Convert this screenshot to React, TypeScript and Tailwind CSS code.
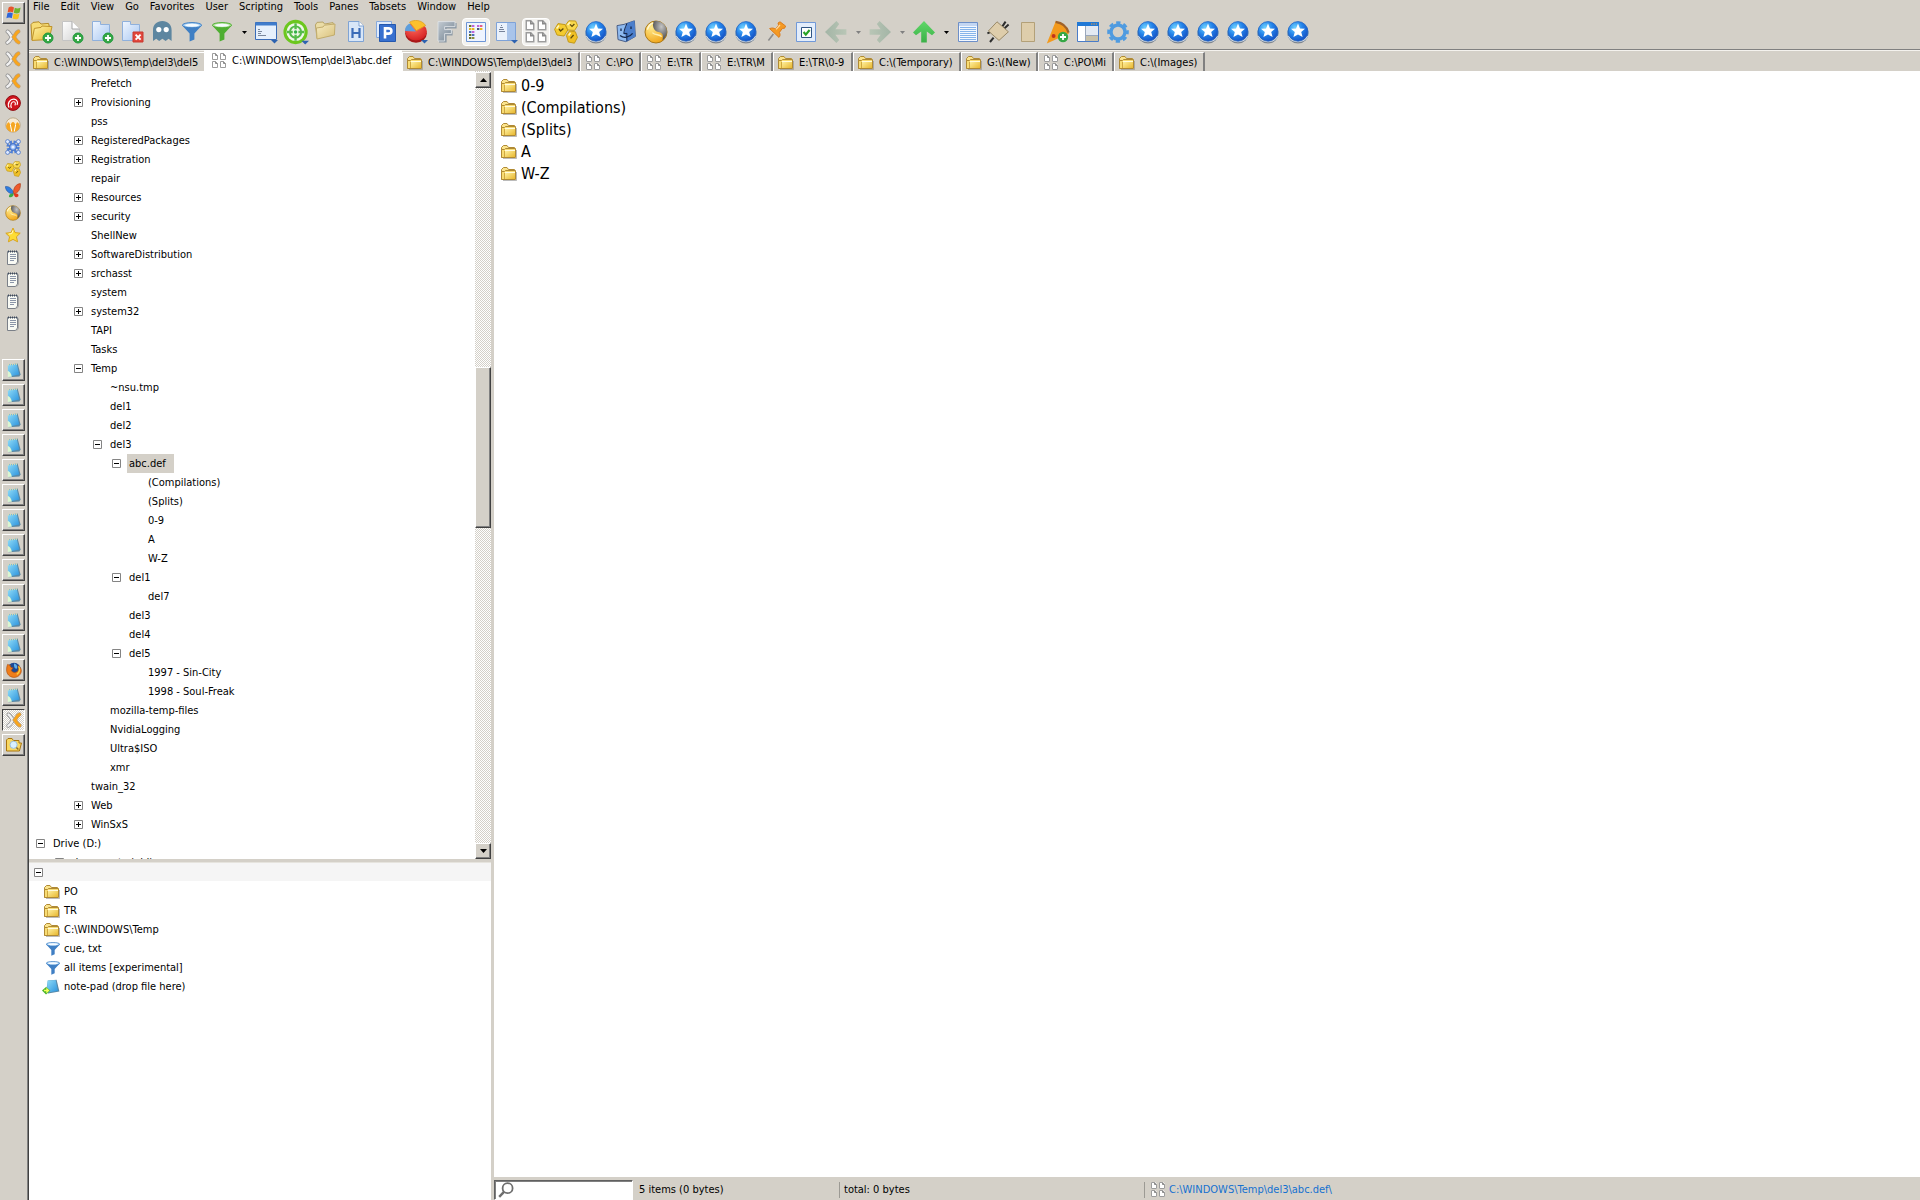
import type { ReactNode } from 'react';

type IconProps = { className?: string };

function Svg({ box, className, children }: { box: string; className: string; children: ReactNode }) {
  return (
    <svg viewBox={box} className={'shrink-0 ' + className} aria-hidden="true" fill="none">
      {children}
    </svg>
  );
}

function Gradients() {
  return (
    <svg className="absolute h-0 w-0" aria-hidden="true">
      <defs>
        <linearGradient id="gold" x1="0" y1="0" x2="1" y2="1">
          <stop offset="0" stopColor="#fff3a6" />
          <stop offset="1" stopColor="#e8b830" />
        </linearGradient>
        <linearGradient id="paleGold" x1="0" y1="0" x2="1" y2="1">
          <stop offset="0" stopColor="#f7ecc2" />
          <stop offset="1" stopColor="#d8c07a" />
        </linearGradient>
        <linearGradient id="sheet" x1="0" y1="0" x2="1" y2="1">
          <stop offset="0" stopColor="#ffffff" />
          <stop offset="1" stopColor="#d2d2d2" />
        </linearGradient>
        <linearGradient id="sky" x1="0" y1="0" x2="1" y2="1">
          <stop offset="0" stopColor="#f0f6ff" />
          <stop offset="1" stopColor="#a9c8f2" />
        </linearGradient>
        <linearGradient id="paper" x1="0" y1="0" x2="1" y2="1">
          <stop offset="0" stopColor="#8fdcf8" />
          <stop offset="1" stopColor="#2a92dc" />
        </linearGradient>
        <linearGradient id="steel" x1="0" y1="0" x2="1" y2="1">
          <stop offset="0" stopColor="#c3cbd2" />
          <stop offset="1" stopColor="#6f7f8e" />
        </linearGradient>
        <linearGradient id="green" x1="0" y1="0" x2="0" y2="1">
          <stop offset="0" stopColor="#5fd868" />
          <stop offset="1" stopColor="#3cb048" />
        </linearGradient>
        <linearGradient id="faded" x1="0" y1="0" x2="0" y2="1">
          <stop offset="0" stopColor="#a3b5a6" />
          <stop offset="1" stopColor="#b9c6b6" />
        </linearGradient>
        <linearGradient id="rim" x1="0" y1="0" x2="0" y2="1">
          <stop offset="0" stopColor="#2f86dc" />
          <stop offset="0.7" stopColor="#4a76a8" />
          <stop offset="1" stopColor="#8a8a8a" />
        </linearGradient>
        <radialGradient id="ball" cx="0.35" cy="0.3" r="0.75">
          <stop offset="0" stopColor="#6fd2ff" />
          <stop offset="0.5" stopColor="#2484ea" />
          <stop offset="1" stopColor="#1450c4" />
        </radialGradient>
        <radialGradient id="amber" cx="0.3" cy="0.3" r="0.8">
          <stop offset="0" stopColor="#ffe98a" />
          <stop offset="1" stopColor="#f0a010" />
        </radialGradient>
        <radialGradient id="smoke" cx="0.6" cy="0.3" r="0.7">
          <stop offset="0" stopColor="#c4c4c4" />
          <stop offset="1" stopColor="#4c4c4c" />
        </radialGradient>
        <radialGradient id="ember" cx="0.4" cy="0.3" r="0.8">
          <stop offset="0" stopColor="#ff6a5a" />
          <stop offset="1" stopColor="#d01a1e" />
        </radialGradient>
      </defs>
    </svg>
  );
}

/* ---------- small icons, 16 px grid ---------- */

function Folder({ className = 'size-4' }: IconProps) {
  return (
    <Svg box="0 0 16 16" className={className}>
      <path d="M2 14.5H15.5V6" stroke="#8d8d8d" strokeOpacity=".6" />
      <path d="M.5 13.5V3.5L2.5 1.5H6L7.5 3.5H13.5V6" fill="#fbe48c" stroke="#b08a34" />
      <path d="M.5 13.5V5.5H3.5L4.5 4.5H14.5V13.5Z" fill="#f8dc74" stroke="#b08a34" />
      <path d="M4 6H14V13H4Z" fill="url(#gold)" />
      <path d="M4 6.5H14" stroke="#fffbe0" />
      <path d="M3.5 7V13" stroke="#d0a840" />
    </Svg>
  );
}

function Panes({ className = 'size-4' }: IconProps) {
  const page = (x: number, y: number) => (
    <g key={x + '-' + y}>
      <path d={`M${x} ${y}h4l2 2v5h-6z`} fill="#fff" />
      <path d={`M${x + 0.5} ${y + 6.5}v-6h3l2 2v4z`} stroke="#9c9c9c" />
      <path d={`M${x + 3.5} ${y + 0.5}v2h2`} stroke="#8a8a8a" />
    </g>
  );
  return (
    <Svg box="0 0 16 16" className={className}>
      {[page(1, 0), page(9, 0), page(1, 8), page(9, 8)]}
    </Svg>
  );
}

function Funnel({ className = 'size-4', tint = '#3f7fc4', rim = '#a9d2f5' }: IconProps & { tint?: string; rim?: string }) {
  return (
    <Svg box="0 0 20 20" className={className}>
      <path d="M0 3.2 7.6 11.5V19.6L12.4 17.6V11.5L20 3.2Z" fill={tint} />
      <ellipse cx="10" cy="3.2" rx="9.6" ry="2.6" fill={rim} stroke={tint} />
      <ellipse cx="10" cy="3.2" rx="7" ry="1.5" fill="#f6fbff" />
    </Svg>
  );
}

function NotePad({ className = 'size-4' }: IconProps) {
  return (
    <Svg box="0 0 16 16" className={className}>
      <path d="M3 2.6 11.6 1.6 14.6 12.6 13.4 14.6 2.6 15.2Z" fill="#5a88a4" />
      <path d="M1.8 2.8 10.8 2 13.2 12.6 2 14.8Z" fill="url(#paper)" />
      <path d="M1.8 9C4.4 9.6 5.6 13 5.8 14.8L1.8 15Z" fill="#dcf6d0" />
      <path d="M2 2.8 11 2" stroke="#d8dcb0" strokeWidth="1.6" strokeDasharray="1 1" />
    </Svg>
  );
}

function CrossLogo({ className = 'size-4' }: IconProps) {
  return (
    <Svg box="0 0 16 16" className={className}>
      <path d="M2.6 2.6C4.6 3.6 5 6 7 8 5.4 10 5 12.4 2.4 13.6" stroke="#8f8f8f" strokeWidth="4" strokeLinecap="round" />
      <path d="M2.6 2.6C4.6 3.6 5 6 7 8 5.4 10 5 12.4 2.4 13.6" stroke="#f1f1f1" strokeWidth="2.6" strokeLinecap="round" />
      <path d="M13.4 2.4C10.6 3.8 10.6 6 8.8 8 10.6 10 11 12.4 13.6 13.4" stroke="#b9a080" strokeWidth="4" strokeLinecap="round" />
      <path d="M13.4 2.4C10.6 3.8 10.6 6 8.8 8 10.6 10 11 12.4 13.6 13.4" stroke="#f9a51c" strokeWidth="2.8" strokeLinecap="round" />
    </Svg>
  );
}

function WindowsFlag() {
  return (
    <Svg box="0 0 16 16" className="size-4">
      <path d="M2.6 2.4C4.6 1.2 6 1.4 8 2.4L7 7.4C5 6.4 3.6 6.4 1.6 7.4Z" fill="#e8542a" />
      <path d="M8.8 2.8C10.8 3.8 12.4 3.8 14.6 2.6L13.6 7.6C11.4 8.8 9.8 8.6 7.8 7.8Z" fill="#6fb52c" />
      <path d="M1.4 8.2C3.4 7.2 4.8 7.2 6.8 8.2L5.8 13.2C3.8 12.2 2.4 12.2.4 13.2Z" fill="#2f66d8" />
      <path d="M7.6 8.6C9.6 9.4 11.2 9.6 13.4 8.4L12.4 13.4C10.2 14.6 8.6 14.4 6.6 13.6Z" fill="#f5c11e" />
    </Svg>
  );
}

function RedSwirl() {
  return (
    <Svg box="0 0 16 16" className="size-4">
      <circle cx="8" cy="8" r="7.4" fill="#d0141c" stroke="#8e0e14" />
      <path d="M4 12.6C2 8 5 4 9 4.2 12 4.6 13.4 7.6 12 10" stroke="#fff" strokeWidth="1.2" />
      <path d="M6.4 13C5 9.4 6.6 6.6 9 6.8 10.6 7.2 10.8 9 9.8 10.4" stroke="#fff" strokeWidth="1.1" />
    </Svg>
  );
}

function AmberFan() {
  return (
    <Svg box="0 0 16 16" className="size-4">
      <circle cx="8" cy="8" r="7.2" fill="#f7ead4" stroke="#b9a88a" />
      <path d="M1 9C3 4 4.4 4 5.4 9 6.4 3.6 9.6 3.6 10.6 9 11.6 4 13 4 15 9 14.4 13 11 15 8 15 5 15 1.6 13 1 9Z" fill="#f5a623" />
      <path d="M5.4 8 6.8 14.6M10.6 8 9.2 14.6" stroke="#fff" />
    </Svg>
  );
}

function BlueGear() {
  return (
    <Svg box="0 0 16 16" className="size-4">
      <circle cx="8" cy="8" r="4.6" stroke="#4f80d8" strokeWidth="4" strokeDasharray="2.2 1.4" />
      <circle cx="8" cy="8" r="3.4" fill="#8fb6f4" stroke="#3c67bd" />
      <circle cx="8" cy="8" r="1.6" fill="#e8f0ff" />
      {[[2.6, 2.6], [13.4, 2.6], [2.6, 13.4], [13.4, 13.4]].map(([x, y]) => (
        <circle key={x + '-' + y} cx={x} cy={y} r="2" fill="#dfeaff" stroke="#4672c4" strokeWidth=".8" />
      ))}
    </Svg>
  );
}

function Cells({ className = 'size-4' }: IconProps) {
  return (
    <Svg box="0 0 24 24" className={className}>
      <path d="M0.6 9.4 4 3.6 11 4.6 13.8 10 10 16 3 15Z" fill="#f4cb2e" stroke="#c29a1c" />
      <path d="M11.6 5 14.8.8 21.6 1 23.6 5.6 20.6 10.4 13.8 10Z" fill="#f9d94e" stroke="#c29a1c" />
      <path d="M12.4 15.4 15.4 11 21.4 11.8 23.4 17.4 20.4 23.2 14.4 22Z" fill="#f0c026" stroke="#c29a1c" />
      <path d="M5 9 6.6 11 9.4 8.4M16 4.4 18 6.4 20.4 4M16.6 18.4 19.6 15" stroke="#5d4a0c" strokeWidth="1.3" />
      <path d="M2.6 8.4 5 5.6M13.6 5 16 2.4M14.6 15.4 16.6 12.8" stroke="#fff6c0" strokeWidth="1.6" />
    </Svg>
  );
}

function Butterfly() {
  return (
    <Svg box="0 0 16 16" className="size-4">
      <path d="M8.4 9.4C6.6 5 3.6 3 .4 3.6.6 7 3 10.4 8 11Z" fill="#2f7de0" stroke="#1c4fa0" strokeWidth=".6" />
      <path d="M8.4 9.4C8.6 4.6 11 1 15.4.6 15.8 5 14 9.6 9 11Z" fill="#ee5a2a" stroke="#a83410" strokeWidth=".6" />
      <path d="M8 10.4C5.6 10.4 3.6 11.4 4 14 6.6 15 8.4 13.6 8.8 10.8Z" fill="#39a845" />
      <path d="M9 10.8C12 9.8 14 10.6 13.4 13.2 11 15.4 9.2 14 8.8 10.8Z" fill="#e2371c" />
    </Svg>
  );
}

function YinYang({ className = 'size-4' }: IconProps) {
  return (
    <Svg box="0 0 24 24" className={className}>
      <circle cx="12" cy="12" r="11" fill="url(#amber)" stroke="#a8781a" />
      <path d="M10 1.2C18 0 24 6 22.8 13.4 22 17 20 19 18.4 20 20 15 18 12.6 14.4 12 9.6 11 7.6 5 10 1.2Z" fill="url(#smoke)" />
      <path d="M8.4 12.6C11 15.6 15.6 14 17.6 16.6" stroke="#fff0b0" strokeWidth="1.4" />
      <path d="M3.6 9C4.6 5.6 6.4 4 8.4 3.2" stroke="#fff6cf" strokeWidth="1.6" strokeLinecap="round" />
    </Svg>
  );
}

function GoldStar() {
  return (
    <Svg box="0 0 16 16" className="size-4">
      <path d="M8 1 10 5.6 15.2 6.2 11.4 9.8 12.6 14.8 8 12.4 3.4 14.8 4.6 9.8.8 6.2 6 5.6Z" fill="#fddc34" stroke="#d9a41c" strokeLinejoin="round" />
      <path d="M8 3.4 6.8 6.6 3.6 7" stroke="#fff8c8" />
    </Svg>
  );
}

function MemoPage() {
  return (
    <Svg box="0 0 16 16" className="size-4">
      <path d="M2.5 2.5H12.5V13L10.5 15.5H2.5Z" fill="#f9faf4" stroke="#7b8088" />
      <path d="M13.5 3.4V13.6L11.6 15.8" stroke="#a7a7a7" />
      <path d="M3 2.4H13" stroke="#3e4a5c" strokeWidth="2" strokeDasharray="1 1" />
      <path d="M5 5.5H11M5 7.5H11M5 9.5H11M5 11.5H9" stroke="#8b95a8" />
    </Svg>
  );
}

function Firefox() {
  return (
    <Svg box="0 0 16 16" className="size-4">
      <circle cx="8" cy="7.6" r="6.8" fill="#1d4a94" />
      <path d="M8 1.6C10.6 2.2 12 4.6 10.8 6.8 9 7 7.6 5.4 8 1.6Z" fill="#5fb0ea" />
      <path d="M1.6 2.4C2.6 3 3.4 3 4.4 3.2 4 5 4.6 5.4 6.8 5.8 6.6 7.4 5.4 7.4 5.4 8.6 6 10.6 9.4 11 11.4 9.4 13 8 12.4 5 12 3.4 14.6 5 15.8 7.6 15.2 10 14.2 13.6 11 15.6 7.6 15.4 3.4 15 .6 12 .6 8 .6 6 .8 4 1.6 2.4Z" fill="#ef7d1a" stroke="#a8480a" strokeWidth=".6" />
      <path d="M12.6 4.4C14.4 7 13.8 10.6 10.8 12.4" stroke="#fbd03a" strokeWidth="1.4" />
    </Svg>
  );
}

function FolderSearch() {
  return (
    <Svg box="0 0 16 16" className="size-4">
      <path d="M.5 14V3L2 1.5H6L7.4 3.5H13V6H15.5L13.4 14Z" fill="#f8d862" stroke="#a8740c" />
      <circle cx="7.6" cy="7.8" r="3.6" fill="#d8f0ff" stroke="#9cc0dc" />
      <path d="M10.4 10.4 12.4 12.4" stroke="#8a6a2a" strokeWidth="1.4" />
    </Svg>
  );
}

function Lens() {
  return (
    <Svg box="0 0 16 16" className="size-4">
      <circle cx="9.6" cy="6.2" r="5" stroke="#6e6e6e" strokeWidth="1.8" />
      <path d="M6 9.8 1.2 14.8" stroke="#6e6e6e" strokeWidth="2.4" />
    </Svg>
  );
}

function NotePadDrop() {
  return (
    <Svg box="0 0 18 16" className="h-4 w-[18px]">
      <path d="M6 1.4 14.6.8 17.4 12.6 6 14.4 4 12Z" fill="#5a88a4" />
      <path d="M5.4 1.6 13.6 1 16 12 5 13.4Z" fill="url(#paper)" />
      <path d="M0 11.5 4 8 8.4 11.5 4 15.4Z" fill="#4db52a" />
      <path d="M2 11.5H5.6M4.4 9.6 6.4 11.5 4.4 13.4" stroke="#f2ff5c" strokeWidth="1.4" />
    </Svg>
  );
}

/* ---------- toolbar icons, 24 px grid ---------- */

const tool = 'size-6';

function PlusBadge() {
  return (
    <g>
      <circle cx="18" cy="18" r="5" fill="#35a745" stroke="#1f9a3c" />
      <path d="M18 15V21M15 18H21" stroke="#fff" strokeWidth="1.8" />
    </g>
  );
}

function FolderNew() {
  return (
    <Svg box="0 0 24 24" className={tool}>
      <path d="M2 20 1 4.6 3 2.4 9 1.8 11 4 18.6 3.4 19.4 7" fill="#f6dc76" stroke="#b48a26" />
      <path d="M2 20.4 4.4 8.4 11 7.4 12 6 22 6.6 19 19.6Z" fill="url(#gold)" stroke="#c0932a" />
      <PlusBadge />
    </Svg>
  );
}

function PageNew() {
  return (
    <Svg box="0 0 24 24" className={tool}>
      <path d="M2.5 1.5H12L19.5 9V20.5H2.5Z" fill="url(#sheet)" stroke="#c4c4c4" />
      <path d="M12 1.5V9H19.5" fill="#fff" stroke="#a5a5a5" />
      <PlusBadge />
    </Svg>
  );
}

function TabNew({ remove }: { remove?: boolean }) {
  return (
    <Svg box="0 0 24 24" className={tool}>
      <path d="M2.5 20.5V1.5H10.5V4.5H19.5V20.5Z" fill="url(#sky)" stroke="#8fb0dc" />
      {remove ? (
        <g>
          <path d="M13 12H23V22H13Z" fill="#e2473c" stroke="#c8382f" />
          <path d="M15.6 14.6 20.6 19.6M20.6 14.6 15.6 19.6" stroke="#fff" strokeWidth="1.9" />
        </g>
      ) : (
        <PlusBadge />
      )}
    </Svg>
  );
}

function Ghost() {
  return (
    <Svg box="0 0 24 24" className={tool}>
      <path d="M3 21V10C3 4.6 7 1 12.4 1 17.6 1 21.6 4.6 21.6 10V21L18.6 18.8 15.6 21 12.4 18.8 9.2 21 6.2 18.8Z" fill="#5d86a0" />
      <circle cx="8.8" cy="9.6" r="2.6" fill="#fff" />
      <circle cx="16.2" cy="9.6" r="2.6" fill="#fff" />
    </Svg>
  );
}

function Corner() {
  return <path d="M17 20H24L20.5 23.6Z" fill="#2d62b0" />;
}

function ConsoleWindow() {
  return (
    <Svg box="0 0 24 24" className={tool}>
      <path d="M1.5 2.5H22.5V19.5H1.5Z" fill="#e6f0fc" stroke="#3a6cb8" />
      <path d="M1.5 2.5H22.5V5.5H1.5Z" fill="#3f7ccc" />
      <path d="M4 9.5H6M4 11.5H8M4 13.5H7M4 15.5H12" stroke="#7a879c" />
      <Corner />
    </Svg>
  );
}

function Target() {
  return (
    <Svg box="0 0 24 24" className="size-[26px]">
      <circle cx="11.6" cy="12" r="9.8" fill="#f0f8ea" stroke="#6cc71e" strokeWidth="2.8" />
      <circle cx="11.6" cy="12" r="5.2" stroke="#55bb4a" strokeWidth="1.8" />
      <path d="M11.6 4V9.4M11.6 14.6V20M3.6 12H9M14.2 12H19.6" stroke="#55bb4a" strokeWidth="2.2" />
      <circle cx="11.6" cy="12" r="1.6" fill="#35b04a" />
      <Corner />
    </Svg>
  );
}

function FadedFolder() {
  return (
    <Svg box="0 0 24 24" className={tool}>
      <path d="M3 18 1.4 5 3 2.4 9 2 10.6 4 19 2.6 19.6 5" fill="#eadca6" stroke="#b8a468" />
      <path d="M3 19 2.4 8 9 7 10.4 5.2 21 4 20.4 15Z" fill="url(#paleGold)" stroke="#c2ac6c" />
    </Svg>
  );
}

function LetterH() {
  return (
    <Svg box="0 0 24 24" className={tool}>
      <path d="M4.5 1.5H15L19.5 6V21.5H4.5Z" fill="#d8e6f8" stroke="#7fa3d4" />
      <path d="M15 1.5V6H19.5" fill="#fff" stroke="#7fa3d4" />
      <path d="M8.5 8V18M15.5 8V18M8.5 13H15.5" stroke="#3a6bb8" strokeWidth="2.2" />
    </Svg>
  );
}

function LetterP() {
  return (
    <Svg box="0 0 24 24" className={tool}>
      <path d="M2.5 1.5H17.5V17.5H2.5Z" fill="#dfeafb" stroke="#86a9dc" />
      <path d="M5.5 4.5H21.5V21.5H5.5Z" fill="#3870cf" stroke="#2558ae" />
      <path d="M11 18.6V8.4H14.4C18.4 8.4 18.4 13.6 14.4 13.6H11" stroke="#fff" strokeWidth="2.6" />
    </Svg>
  );
}

function Pie() {
  return (
    <Svg box="0 0 24 24" className={tool}>
      <ellipse cx="12" cy="13.6" rx="10.8" ry="9.2" fill="#a81818" />
      <ellipse cx="12" cy="11.4" rx="10.8" ry="9" fill="url(#ember)" />
      <path d="M12 11.6 1 11C1 7 3 5 5.6 3.6Z" fill="#5d9edc" />
      <path d="M12.4 10.6 5.6 2.2C10 -.8 18 -.2 21.6 5.6Z" fill="#fbc02c" stroke="#e0a020" strokeWidth=".8" />
      <Corner />
    </Svg>
  );
}

function LetterF() {
  return (
    <Svg box="0 0 24 24" className={tool}>
      <path d="M5 3H22.6V8.4H12.6V10.6H18.6V15.4H12.6V22.4H5Z" fill="#8d9aa6" />
      <path d="M4 1.6H21V6.6H10.6V9.6H17.4V13.6H10.6V21H4Z" fill="url(#steel)" stroke="#dfe3e6" strokeWidth=".9" />
    </Svg>
  );
}

function ListGrid() {
  const colors = [
    ['#6b6f2c', '#c062d8', '#c062d8', '#e05c8c'],
    ['#e9b51c', '#e9b51c', '#4a5a78', '#e9b51c'],
    ['#4a70b8', '#c062d8'],
    ['#5f6a2c', '#4a70b8'],
    ['#6b6f2c', '#8a8f3c'],
  ];
  return (
    <Svg box="0 0 24 24" className={tool}>
      <path d="M2.5 2.5H21.5V21.5H2.5Z" fill="#eef4ff" stroke="#6d95d6" />
      {colors.map((row, r) =>
        row.map((c, k) => (
          <path key={r + '-' + k} d={`M${[5, 8, 13, 16][k]} ${6 + r * 3}h2.4`} stroke={c} strokeWidth="2" />
        )),
      )}
    </Svg>
  );
}

function SidePanel() {
  return (
    <Svg box="0 0 24 24" className={tool}>
      <path d="M2.5 2.5H21.5V20.5H2.5Z" fill="#eaf1fb" stroke="#7ea2d8" />
      <path d="M13 3H21V20H13Z" fill="#a9c4ea" />
      <path d="M7 5.5H8M6 7.5H9M5 9.5H10M5 11.5H11" stroke="#77839a" />
      <Corner />
    </Svg>
  );
}

function StarBall() {
  return (
    <Svg box="0 0 24 24" className={tool}>
      <circle cx="12" cy="13" r="10.6" fill="url(#rim)" />
      <path d="M2.4 16A10.4 9 0 0 0 21.6 16" stroke="#d4d9e0" strokeWidth="1.2" />
      <circle cx="12" cy="11.4" r="9.8" fill="url(#ball)" stroke="#2466c4" strokeWidth=".8" />
      <path d="M12 3.6 14 8.4 19 8.8 15.2 12 16.6 17 12 14.4 7.4 17 8.8 12 5 8.8 10 8.4Z" fill="#fff" />
    </Svg>
  );
}

function Finder() {
  return (
    <Svg box="0 0 24 24" className={tool}>
      <path d="M3 5.6 10 4.4 20.4.8 21.4 16.4 12 21.8 4 19.6Z" fill="#8ebaf0" stroke="#4a5f88" />
      <path d="M12.6 3.6 20.4.8 21.4 16.4 12 21.8C13 17 11 14 9.6 13.4 11 10 11.4 7 12.6 3.6Z" fill="#4c7fcc" />
      <path d="M13 3.4C11 7.4 10 11 9.8 13.6L13 13.4C12.6 16.4 12.8 19 13 21" stroke="#16284c" />
      <path d="M7 8.4V11M17 6.4V9M6 15.6C10 18.6 15.4 17.6 18.6 13.4" stroke="#16284c" strokeWidth="1.3" />
    </Svg>
  );
}

function Pin() {
  return (
    <Svg box="0 0 24 24" className={tool}>
      <path d="M9.4 14 4.4 20.4" stroke="#8c8c8c" strokeWidth="1.6" />
      <path d="M5.6 8.6C8 7.6 10 8 11.4 9L14.6 5.2 14 3 16 1.8 21.6 6 20.6 8.2 18.4 8.4 15.4 12.4C16.4 14.4 16.2 16 15 17.4Z" fill="#f59a23" stroke="#dc7c1c" />
      <path d="M12 9.4 16 5" stroke="#ffd79a" strokeWidth="1.4" />
    </Svg>
  );
}

function CheckPane() {
  return (
    <Svg box="0 0 24 24" className={tool}>
      <path d="M2.5 2.5H21.5V21.5H2.5Z" fill="#e3edfb" stroke="#7199d8" />
      <path d="M7.5 7.5H17.5V17.5H7.5Z" fill="#fff" stroke="#2f5584" />
      <path d="M9.6 12 11.8 14.6 15.6 10" stroke="#27a327" strokeWidth="2.2" />
    </Svg>
  );
}

function Arrow({ turn = '', fill }: { turn?: string; fill: string }) {
  return (
    <Svg box="0 0 24 24" className={'size-6 ' + turn}>
      <path d="M12 1 23 12.4 20 15.2 14.8 11.4V22.4H9.2V11.4L4 15.2 1 12.4Z" fill={fill} />
    </Svg>
  );
}

function TextPane() {
  return (
    <Svg box="0 0 24 24" className={tool}>
      <path d="M2.5 2.5H21.5V21.5H2.5Z" fill="#f3f8ff" stroke="#6d8fc8" />
      <path d="M3 3H21V6H3Z" fill="#c3d6f2" />
      <path d="M4 7.5H20M4 9.5H20M4 11.5H20M4 13.5H20M4 15.5H20M4 17.5H20M4 19.5H20" stroke="#86b4ea" />
    </Svg>
  );
}

function Diamond() {
  return (
    <Svg box="0 0 24 24" className={tool}>
      <path d="M1.4 13.4 6 11.4M4 22 7.6 17.6M16.4 6.4 19.6 1.6M18.6 8.2 22.6 4.6" stroke="#2d2d2d" strokeWidth="2" />
      <path d="M11 1.8 22.4 11.8 13 20.4 2.4 11Z" fill="#decdab" stroke="#9a8a68" />
    </Svg>
  );
}

function Slab() {
  return (
    <Svg box="0 0 24 24" className={tool}>
      <path d="M5.5 2.5H18.5V21.5H5.5Z" fill="#decdab" stroke="#b3a078" />
    </Svg>
  );
}

function Pizza() {
  return (
    <Svg box="0 0 24 24" className={tool}>
      <path d="M9.6 1.4C16.4 2.4 21.4 7 23 13.6L.8 23.4Z" fill="#f39a1d" />
      <path d="M9.6 1.8C16.4 2.8 21 7 22.6 12.6" stroke="#a0622a" strokeWidth="2.2" />
      <circle cx="7.6" cy="16" r="2" fill="#c3321c" />
      <circle cx="17" cy="17" r="5.2" fill="#35a745" />
      <path d="M17 14V20M14 17H20" stroke="#fff" strokeWidth="1.8" />
    </Svg>
  );
}

function LayoutWindow() {
  return (
    <Svg box="0 0 24 24" className={tool}>
      <path d="M1.5 2.5H22.5V21.5H1.5Z" fill="#fff" stroke="#4a7cc8" />
      <path d="M1 2H23V6H1Z" fill="#1f78d6" />
      <path d="M15 4H21" stroke="#f09a3c" strokeWidth="1.2" strokeDasharray="1.4 1" />
      <path d="M9.5 6V21M9.5 15.5H22" stroke="#9aa7bb" />
      <path d="M10 6H22V15H10Z" fill="#e3e9f2" />
      <path d="M10 16H22V21H10Z" fill="#c8c0a8" />
    </Svg>
  );
}

function Gear() {
  return (
    <Svg box="0 0 24 24" className={tool}>
      <circle cx="12" cy="12" r="7" stroke="#4f9be0" strokeWidth="3.4" />
      <circle cx="12" cy="12" r="9.2" stroke="#4f9be0" strokeWidth="3.2" strokeDasharray="4.2 3.03" strokeDashoffset="2.1" />
    </Svg>
  );
}

/* ---------- data ---------- */

const menus = ['File', 'Edit', 'View', 'Go', 'Favorites', 'User', 'Scripting', 'Tools', 'Panes', 'Tabsets', 'Window', 'Help'];

type Tool = { label: string; icon?: ReactNode; kind?: 'drop' | 'dropOff' | 'on' };

const star = (n: number): Tool => ({ label: 'User command ' + n, icon: <StarBall /> });

const tools: Tool[] = [
  { label: 'New file', icon: <PageNew /> },
  { label: 'New tab', icon: <TabNew /> },
  { label: 'Close tab', icon: <TabNew remove /> },
  { label: 'Ghost filter', icon: <Ghost /> },
  { label: 'Visual filter', icon: <Funnel className="size-5" /> },
  { label: 'Global filter', icon: <Funnel className="size-5" tint="#4fae32" rim="#b9e6a4" /> },
  { label: 'Filter menu', kind: 'drop' },
  { label: 'Console', icon: <ConsoleWindow /> },
  { label: 'Target', icon: <Target /> },
  { label: 'Open folder', icon: <FadedFolder /> },
  { label: 'Hash', icon: <LetterH /> },
  { label: 'Properties', icon: <LetterP /> },
  { label: 'Disk usage', icon: <Pie /> },
  { label: 'Fonts', icon: <LetterF /> },
  { label: 'Details list', icon: <ListGrid />, kind: 'on' },
  { label: 'Side panel', icon: <SidePanel /> },
  { label: 'Four panes', icon: <Panes className="size-6" />, kind: 'on' },
  { label: 'Cells', icon: <Cells className="size-6" /> },
  star(1),
  { label: 'Finder', icon: <Finder /> },
  { label: 'Balance', icon: <YinYang className="size-6" /> },
  star(2),
  star(3),
  star(4),
  { label: 'Pin', icon: <Pin /> },
  { label: 'Check boxes', icon: <CheckPane /> },
  { label: 'Back', icon: <Arrow turn="-rotate-90" fill="url(#faded)" /> },
  { label: 'Back history', kind: 'dropOff' },
  { label: 'Forward', icon: <Arrow turn="rotate-90" fill="url(#faded)" /> },
  { label: 'Forward history', kind: 'dropOff' },
  { label: 'Up', icon: <Arrow fill="url(#green)" /> },
  { label: 'Up history', kind: 'drop' },
  { label: 'Text view', icon: <TextPane /> },
  { label: 'Rotate', icon: <Diamond /> },
  { label: 'Slab', icon: <Slab /> },
  { label: 'Add slice', icon: <Pizza /> },
  { label: 'Layout', icon: <LayoutWindow /> },
  { label: 'Settings', icon: <Gear /> },
  star(5),
  star(6),
  star(7),
  star(8),
  star(9),
  star(10),
];

const tabs: { label: string; panes?: boolean; width: string }[] = [
  { label: 'C:\\WINDOWS\\Temp\\del3\\del5', width: 'w-[175px]' },
  { label: 'C:\\WINDOWS\\Temp\\del3\\abc.def', panes: true, width: 'w-[198px]' },
  { label: 'C:\\WINDOWS\\Temp\\del3\\del3', width: 'w-[178px]' },
  { label: 'C:\\PO', panes: true, width: 'w-[61px]' },
  { label: 'E:\\TR', panes: true, width: 'w-[60px]' },
  { label: 'E:\\TR\\M', panes: true, width: 'w-[72px]' },
  { label: 'E:\\TR\\0-9', width: 'w-[80px]' },
  { label: 'C:\\(Temporary)', width: 'w-[108px]' },
  { label: 'G:\\(New)', width: 'w-[77px]' },
  { label: 'C:\\PO\\Mi', panes: true, width: 'w-[76px]' },
  { label: 'C:\\(Images)', width: 'w-[91px]' },
];

type Node = [level: 0 | 1 | 2 | 3 | 4 | 5, label: string, sign?: '+' | '-'];

const tree: Node[] = [
  [2, 'Prefetch'],
  [2, 'Provisioning', '+'],
  [2, 'pss'],
  [2, 'RegisteredPackages', '+'],
  [2, 'Registration', '+'],
  [2, 'repair'],
  [2, 'Resources', '+'],
  [2, 'security', '+'],
  [2, 'ShellNew'],
  [2, 'SoftwareDistribution', '+'],
  [2, 'srchasst', '+'],
  [2, 'system'],
  [2, 'system32', '+'],
  [2, 'TAPI'],
  [2, 'Tasks'],
  [2, 'Temp', '-'],
  [3, '~nsu.tmp'],
  [3, 'del1'],
  [3, 'del2'],
  [3, 'del3', '-'],
  [4, 'abc.def', '-'],
  [5, '(Compilations)'],
  [5, '(Splits)'],
  [5, '0-9'],
  [5, 'A'],
  [5, 'W-Z'],
  [4, 'del1', '-'],
  [5, 'del7'],
  [4, 'del3'],
  [4, 'del4'],
  [4, 'del5', '-'],
  [5, '1997 - Sin-City'],
  [5, '1998 - Soul-Freak'],
  [3, 'mozilla-temp-files'],
  [3, 'NvidiaLogging'],
  [3, 'Ultra$ISO'],
  [3, 'xmr'],
  [2, 'twain_32'],
  [2, 'Web', '+'],
  [2, 'WinSxS', '+'],
  [0, 'Drive (D:)', '-'],
  [1, 'documents (old)', '+'],
];

const indent = ['pl-[7px]', 'pl-[26px]', 'pl-[45px]', 'pl-[64px]', 'pl-[83px]', 'pl-[102px]'];

const catalog: { label: string; icon: ReactNode }[] = [
  { label: 'PO', icon: <Folder /> },
  { label: 'TR', icon: <Folder /> },
  { label: 'C:\\WINDOWS\\Temp', icon: <Folder /> },
  { label: 'cue, txt', icon: <Funnel className="size-[14px]" /> },
  { label: 'all items [experimental]', icon: <Funnel className="size-[14px]" /> },
  { label: 'note-pad (drop file here)', icon: <NotePadDrop /> },
];

const files = ['0-9', '(Compilations)', '(Splits)', 'A', 'W-Z'];

const launchers: { label: string; icon: ReactNode }[] = [
  { label: 'File manager 1', icon: <CrossLogo /> },
  { label: 'File manager 2', icon: <CrossLogo /> },
  { label: 'File manager 3', icon: <CrossLogo /> },
  { label: 'Red swirl', icon: <RedSwirl /> },
  { label: 'Amber fan', icon: <AmberFan /> },
  { label: 'Blue gear', icon: <BlueGear /> },
  { label: 'Cells', icon: <Cells /> },
  { label: 'Butterfly', icon: <Butterfly /> },
  { label: 'Balance', icon: <YinYang /> },
  { label: 'Favorites', icon: <GoldStar /> },
  { label: 'Memo 1', icon: <MemoPage /> },
  { label: 'Memo 2', icon: <MemoPage /> },
  { label: 'Memo 3', icon: <MemoPage /> },
  { label: 'Memo 4', icon: <MemoPage /> },
];

const tasks: { label: string; icon: ReactNode; active?: boolean }[] = [
  ...Array.from({ length: 12 }, (_, i) => ({ label: 'Note pad ' + (i + 1), icon: <NotePad /> })),
  { label: 'Firefox', icon: <Firefox /> },
  { label: 'Note pad 13', icon: <NotePad /> },
  { label: 'File manager', icon: <CrossLogo />, active: true },
  { label: 'Search folder', icon: <FolderSearch /> },
];

/* ---------- parts ---------- */

const raised =
  'border border-t-white border-l-white border-r-[#404040] border-b-[#404040] bg-[#d4d0c8] shadow-[inset_-1px_-1px_0_#808080]';
const checker = 'bg-[repeating-conic-gradient(#ffffff_0_25%,#d4d0c8_0_50%)] bg-[length:2px_2px]';

function TaskStrip() {
  return (
    <aside className="flex w-[29px] shrink-0 flex-col border-r border-[#404040] pt-0.5 pl-0.5 shadow-[inset_-1px_0_0_#808080]">
      <button aria-label="Start" className={'flex h-[22px] w-[23px] items-center justify-center ' + raised}>
        <WindowsFlag />
      </button>
      <div className="mt-0.5 flex w-[22px] flex-col">
        {launchers.map((l) => (
          <button key={l.label} aria-label={l.label} className="flex h-[22px] items-center justify-center">
            {l.icon}
          </button>
        ))}
      </div>
      <div className="mt-[25px] flex w-[23px] flex-col gap-[3px]">
        {tasks.map((t) => (
          <button
            key={t.label}
            aria-label={t.label}
            className={
              'flex h-[22px] items-center justify-center ' +
              (t.active ? 'border border-t-[#404040] border-l-[#404040] border-r-white border-b-white ' + checker : raised)
            }
          >
            {t.icon}
          </button>
        ))}
      </div>
    </aside>
  );
}

function Caret({ off }: { off?: boolean }) {
  return (
    <svg viewBox="0 0 5 3" className="h-[3px] w-[5px]" aria-hidden="true">
      <path d="M0 0H5L2.5 3Z" fill={off ? '#808080' : '#000'} />
    </svg>
  );
}

function Toolbar() {
  return (
    <div role="toolbar" className="flex h-9 items-center pt-0.5">
      <button aria-label="New folder" className="flex w-[26px] items-center justify-center">
        <FolderNew />
      </button>
      {tools.map((t, i) =>
        t.kind === 'drop' || t.kind === 'dropOff' ? (
          <button key={t.label} aria-label={t.label} className="flex h-7 w-[14px] items-center justify-center">
            <Caret off={t.kind === 'dropOff'} />
          </button>
        ) : (
          <button
            key={t.label}
            aria-label={t.label}
            className={
              'mr-px flex size-[28px] shrink-0 items-center justify-center ' +
              (i === 0 ? 'ml-[3px] ' : 'ml-px ') +
              (t.kind === 'on' ? 'rounded-sm border border-white bg-[#f3f2ef]' : '')
            }
          >
            {t.icon}
          </button>
        ),
      )}
    </div>
  );
}

function TabBar() {
  return (
    <div role="tablist" className="flex h-[22px] items-end border-t border-[#808080] shadow-[inset_0_1px_0_#f4f2ee]">
      {tabs.map((t, i) => {
        const active = i === 1;
        return (
          <button
            key={t.label}
            role="tab"
            aria-selected={active}
            className={
              'flex shrink-0 items-center gap-[5px] whitespace-nowrap ' +
              t.width +
              (active
                ? ' h-[21px] bg-white pl-[7px]'
                : ' h-[19px] border-t border-white pt-px pl-1 ' +
                  (i === 0 ? '' : 'border-l border-l-white border-r-2 border-r-[#808080]'))
            }
          >
            {t.panes ? <Panes /> : <Folder />}
            {t.label}
          </button>
        );
      })}
    </div>
  );
}

function Sign({ sign }: { sign?: '+' | '-' }) {
  if (!sign) return <span className="size-[9px] shrink-0" />;
  return (
    <svg viewBox="0 0 9 9" className="size-[9px] shrink-0" aria-hidden="true" fill="none">
      <path d="M.5 .5H8.5V8.5H.5Z" fill="#fff" stroke="#848484" />
      <path d={sign === '+' ? 'M2 4.5H7M4.5 2V7' : 'M2 4.5H7'} stroke="#000" />
    </svg>
  );
}

function Tree() {
  return (
    <div className="flex h-[788px] shrink-0 bg-white">
      <ul role="tree" className="min-w-0 flex-1 overflow-hidden pt-[3px]">
        {tree.map(([level, label, sign], i) => (
          <li key={i} role="treeitem" aria-level={level + 1} className={'flex h-[19px] items-center ' + indent[level]}>
            <Sign sign={sign} />
            <button
              className={
                'ml-1.5 h-[19px] whitespace-nowrap pt-px pl-0.5 ' + (label === 'abc.def' ? 'bg-[#d4d0c8] pr-2' : '')
              }
            >
              {label}
            </button>
          </li>
        ))}
      </ul>
      <div className={'flex w-4 flex-col ' + checker}>
        <button aria-label="Scroll up" className={'mt-px flex h-4 items-center justify-center ' + raised}>
          <svg viewBox="0 0 7 4" className="h-1 w-[7px]" aria-hidden="true">
            <path d="M0 4H7L3.5 0Z" />
          </svg>
        </button>
        <div className="h-[279px]" />
        <div className={'h-[161px] ' + raised} />
        <button aria-label="Scroll down" className={'mt-auto flex h-4 items-center justify-center ' + raised}>
          <svg viewBox="0 0 7 4" className="h-1 w-[7px]" aria-hidden="true">
            <path d="M0 0H7L3.5 4Z" />
          </svg>
        </button>
      </div>
    </div>
  );
}

function Catalog() {
  return (
    <div className="min-h-0 flex-1 border-t border-[#e6e4de] bg-white">
      <div className="flex h-[18px] items-center bg-[#f5f5f5] pl-[5px]">
        <Sign sign="-" />
      </div>
      <ul>
        {catalog.map((c) => (
          <li key={c.label}>
            <button className="flex h-[19px] items-center pt-0.5 whitespace-nowrap">
              <span className="ml-[13px] flex w-[18px] justify-end">{c.icon}</span>
              <span className="ml-1">{c.label}</span>
            </button>
          </li>
        ))}
      </ul>
    </div>
  );
}

function StatusBar() {
  return (
    <footer className="flex h-[23px] shrink-0 items-center pt-0.5">
      <label className="flex h-5 w-[139px] items-center border border-t-[#606060] border-l-[#606060] border-r-white border-b-white bg-white pl-[3px] shadow-[inset_1px_1px_0_#808080]">
        <Lens />
        <input aria-label="Search" className="min-w-0 flex-1 bg-transparent px-1 outline-none" />
      </label>
      <span className="w-[206px] pl-1.5">5 items (0 bytes)</span>
      <span className="w-[305px] border-l border-[#9c9a94] pl-1">total: 0 bytes</span>
      <span className="flex items-center gap-[3px] border-l border-[#9c9a94] pl-[5px]">
        <Panes />
        <a href="#path" className="text-[#1470d0]">
          C:\WINDOWS\Temp\del3\abc.def\
        </a>
      </span>
    </footer>
  );
}

export default function App() {
  return (
    <div className="flex h-screen overflow-hidden bg-[#d4d0c8] font-['DejaVu_Sans_Condensed','DejaVu_Sans',sans-serif] text-[11px] leading-[16px] text-black">
      <Gradients />
      <TaskStrip />
      <div className="flex min-w-0 flex-1 flex-col">
        <nav aria-label="Menu" className="flex h-[13px] items-center pl-1">
          {menus.map((m) => (
            <button key={m} className="pr-[11px] leading-3">
              {m}
            </button>
          ))}
        </nav>
        <Toolbar />
        <TabBar />
        <div className="flex min-h-0 flex-1">
          <div className="flex w-[462px] shrink-0 flex-col gap-[3px]">
            <Tree />
            <Catalog />
          </div>
          <main className="ml-[3px] flex min-w-0 flex-1 flex-col">
            <ul className="flex-1 bg-white pt-1 pl-[7px]">
              {files.map((f) => (
                <li key={f}>
                  <button className="flex h-[22px] items-center gap-1 text-base whitespace-nowrap">
                    <Folder />
                    {f}
                  </button>
                </li>
              ))}
            </ul>
            <StatusBar />
          </main>
        </div>
      </div>
    </div>
  );
}
